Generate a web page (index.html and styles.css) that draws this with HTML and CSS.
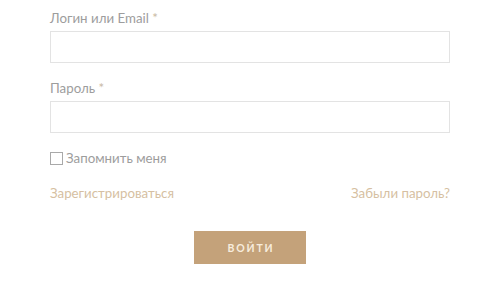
FILE: index.html
```html
<!DOCTYPE html>
<html lang="ru">
<head>
<meta charset="utf-8">
<link rel="stylesheet" href="styles.css">
</head>
<body>
<form class="login">
  <label class="field">
    <span class="label">Логин или Email <span class="req">*</span></span>
    <span class="input"></span>
  </label>
  <label class="field">
    <span class="label">Пароль <span class="req">*</span></span>
    <span class="input"></span>
  </label>
  <label class="remember"><span class="box"></span>Запомнить меня</label>
  <div class="links">
    <a class="link">Зарегистрироваться</a>
    <a class="link">Забыли пароль?</a>
  </div>
  <div class="actions"><button class="btn" type="button">ВОЙТИ</button></div>
</form>
</body>
</html>
```
FILE: styles.css
```css
html, body { margin: 0; padding: 0; background: #fff; }
body { font-family: Lato, "Open Sans", sans-serif; }
.login { width: 400px; margin: 0 auto; padding-top: 10px; display: flex; flex-direction: column; }
.field { display: flex; flex-direction: column; margin-bottom: 17px; }
.label { font-size: 13.3px; line-height: 16px; color: #9d9d9d; margin-bottom: 5px; }
.req { color: #c9b9a3; }
.input { display: block; height: 30px; border: 1px solid #e3e3e3; background: #fff; }
.remember { display: flex; align-items: center; font-size: 13.3px; color: #9d9d9d; line-height: 16px; margin-top: 0; }
.box { width: 11px; height: 11px; border: 1px solid #a9a9a9; margin-right: 3px; }
.links { display: flex; justify-content: space-between; margin-top: 19px; font-size: 13.3px; line-height: 16px; }
.link { color: #d6bfa2; }
.actions { display: flex; justify-content: center; margin-top: 30px; }
.btn { width: 112px; height: 33px; border: 0; background: #c4a27a; color: #f7ecdd; font-family: inherit; font-weight: 700; font-size: 10.5px; letter-spacing: 1.8px; padding: 0 0 0 2px; }
```
